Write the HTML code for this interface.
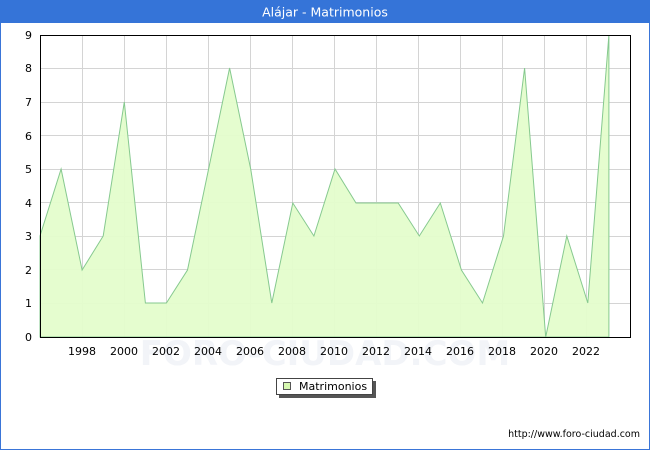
<!DOCTYPE html>
<html><head><style>
body{margin:0;width:650px;height:450px;overflow:hidden;background:#fff;font-family:"DejaVu Sans","Liberation Sans",sans-serif}
</style></head><body>
<svg width="650" height="450" xmlns="http://www.w3.org/2000/svg" font-family="DejaVu Sans, Liberation Sans, sans-serif">
<rect x="0" y="0" width="650" height="450" fill="#fff"/>
<rect x="0.5" y="0.5" width="649" height="449" fill="none" stroke="#3a75d8" stroke-width="1"/>
<rect x="0" y="0" width="650" height="23" fill="#3574d8"/>
<text x="325" y="16.5" text-anchor="middle" font-size="12.5" fill="#fff">Alájar - Matrimonios</text>
<g stroke="#d4d4d4" stroke-width="1">
<line x1="40" y1="303.5" x2="630" y2="303.5"/><line x1="40" y1="269.5" x2="630" y2="269.5"/>
<line x1="40" y1="236.5" x2="630" y2="236.5"/><line x1="40" y1="202.5" x2="630" y2="202.5"/>
<line x1="40" y1="169.5" x2="630" y2="169.5"/><line x1="40" y1="135.5" x2="630" y2="135.5"/>
<line x1="40" y1="102.5" x2="630" y2="102.5"/><line x1="40" y1="68.5" x2="630" y2="68.5"/>
<line x1="82.5" y1="35" x2="82.5" y2="337"/><line x1="124.5" y1="35" x2="124.5" y2="337"/>
<line x1="166.5" y1="35" x2="166.5" y2="337"/><line x1="208.5" y1="35" x2="208.5" y2="337"/>
<line x1="250.5" y1="35" x2="250.5" y2="337"/><line x1="292.5" y1="35" x2="292.5" y2="337"/>
<line x1="334.5" y1="35" x2="334.5" y2="337"/><line x1="376.5" y1="35" x2="376.5" y2="337"/>
<line x1="418.5" y1="35" x2="418.5" y2="337"/><line x1="460.5" y1="35" x2="460.5" y2="337"/>
<line x1="502.5" y1="35" x2="502.5" y2="337"/><line x1="544.5" y1="35" x2="544.5" y2="337"/>
<line x1="586.5" y1="35" x2="586.5" y2="337"/>
</g>
<text x="325" y="365" text-anchor="middle" font-size="34" fill="#f2f4f8" font-weight="bold">FORO-CIUDAD.COM</text>
<polygon fill="#e4fdcc" fill-opacity="0.95" stroke="#86c98f" stroke-width="1" points="40,337 40,236 61.1,169 82.1,270 103.2,236 124.3,102 145.4,303 166.4,303 187.5,270 208.6,169 229.6,68 250.7,169 271.8,303 292.8,203 313.9,236 335,169 356,203 377.1,203 398.2,203 419.3,236 440.3,203 461.4,270 482.5,303 503.5,236 524.6,68 545.7,337 566.8,236 587.8,303 608.9,35 608.9,337"/>
<rect x="40.5" y="35.5" width="590" height="302" fill="none" stroke="#000" stroke-width="1"/>
<g font-size="11" fill="#000" text-anchor="end">
<text x="32" y="341">0</text><text x="32" y="307">1</text><text x="32" y="274">2</text>
<text x="32" y="240">3</text><text x="32" y="207">4</text><text x="32" y="173">5</text>
<text x="32" y="140">6</text><text x="32" y="106">7</text><text x="32" y="72">8</text><text x="32" y="39">9</text>
</g>
<g font-size="11" fill="#000" text-anchor="middle">
<text x="82" y="355">1998</text><text x="124" y="355">2000</text><text x="166" y="355">2002</text>
<text x="208" y="355">2004</text><text x="250" y="355">2006</text><text x="292" y="355">2008</text>
<text x="334" y="355">2010</text><text x="376" y="355">2012</text><text x="418" y="355">2014</text>
<text x="460" y="355">2016</text><text x="502" y="355">2018</text><text x="544" y="355">2020</text>
<text x="586" y="355">2022</text>
</g>
<rect x="279" y="381" width="97" height="17" fill="#555"/>
<rect x="276.5" y="378.5" width="96" height="16" fill="#fff" stroke="#444"/>
<rect x="283.5" y="382.5" width="7" height="7" fill="#d6f8b0" stroke="#555"/>
<text x="299" y="390" font-size="11" fill="#000">Matrimonios</text>
<text x="640" y="437" text-anchor="end" font-size="9.5" fill="#000">http://www.foro-ciudad.com</text>
</svg>
</body></html>
